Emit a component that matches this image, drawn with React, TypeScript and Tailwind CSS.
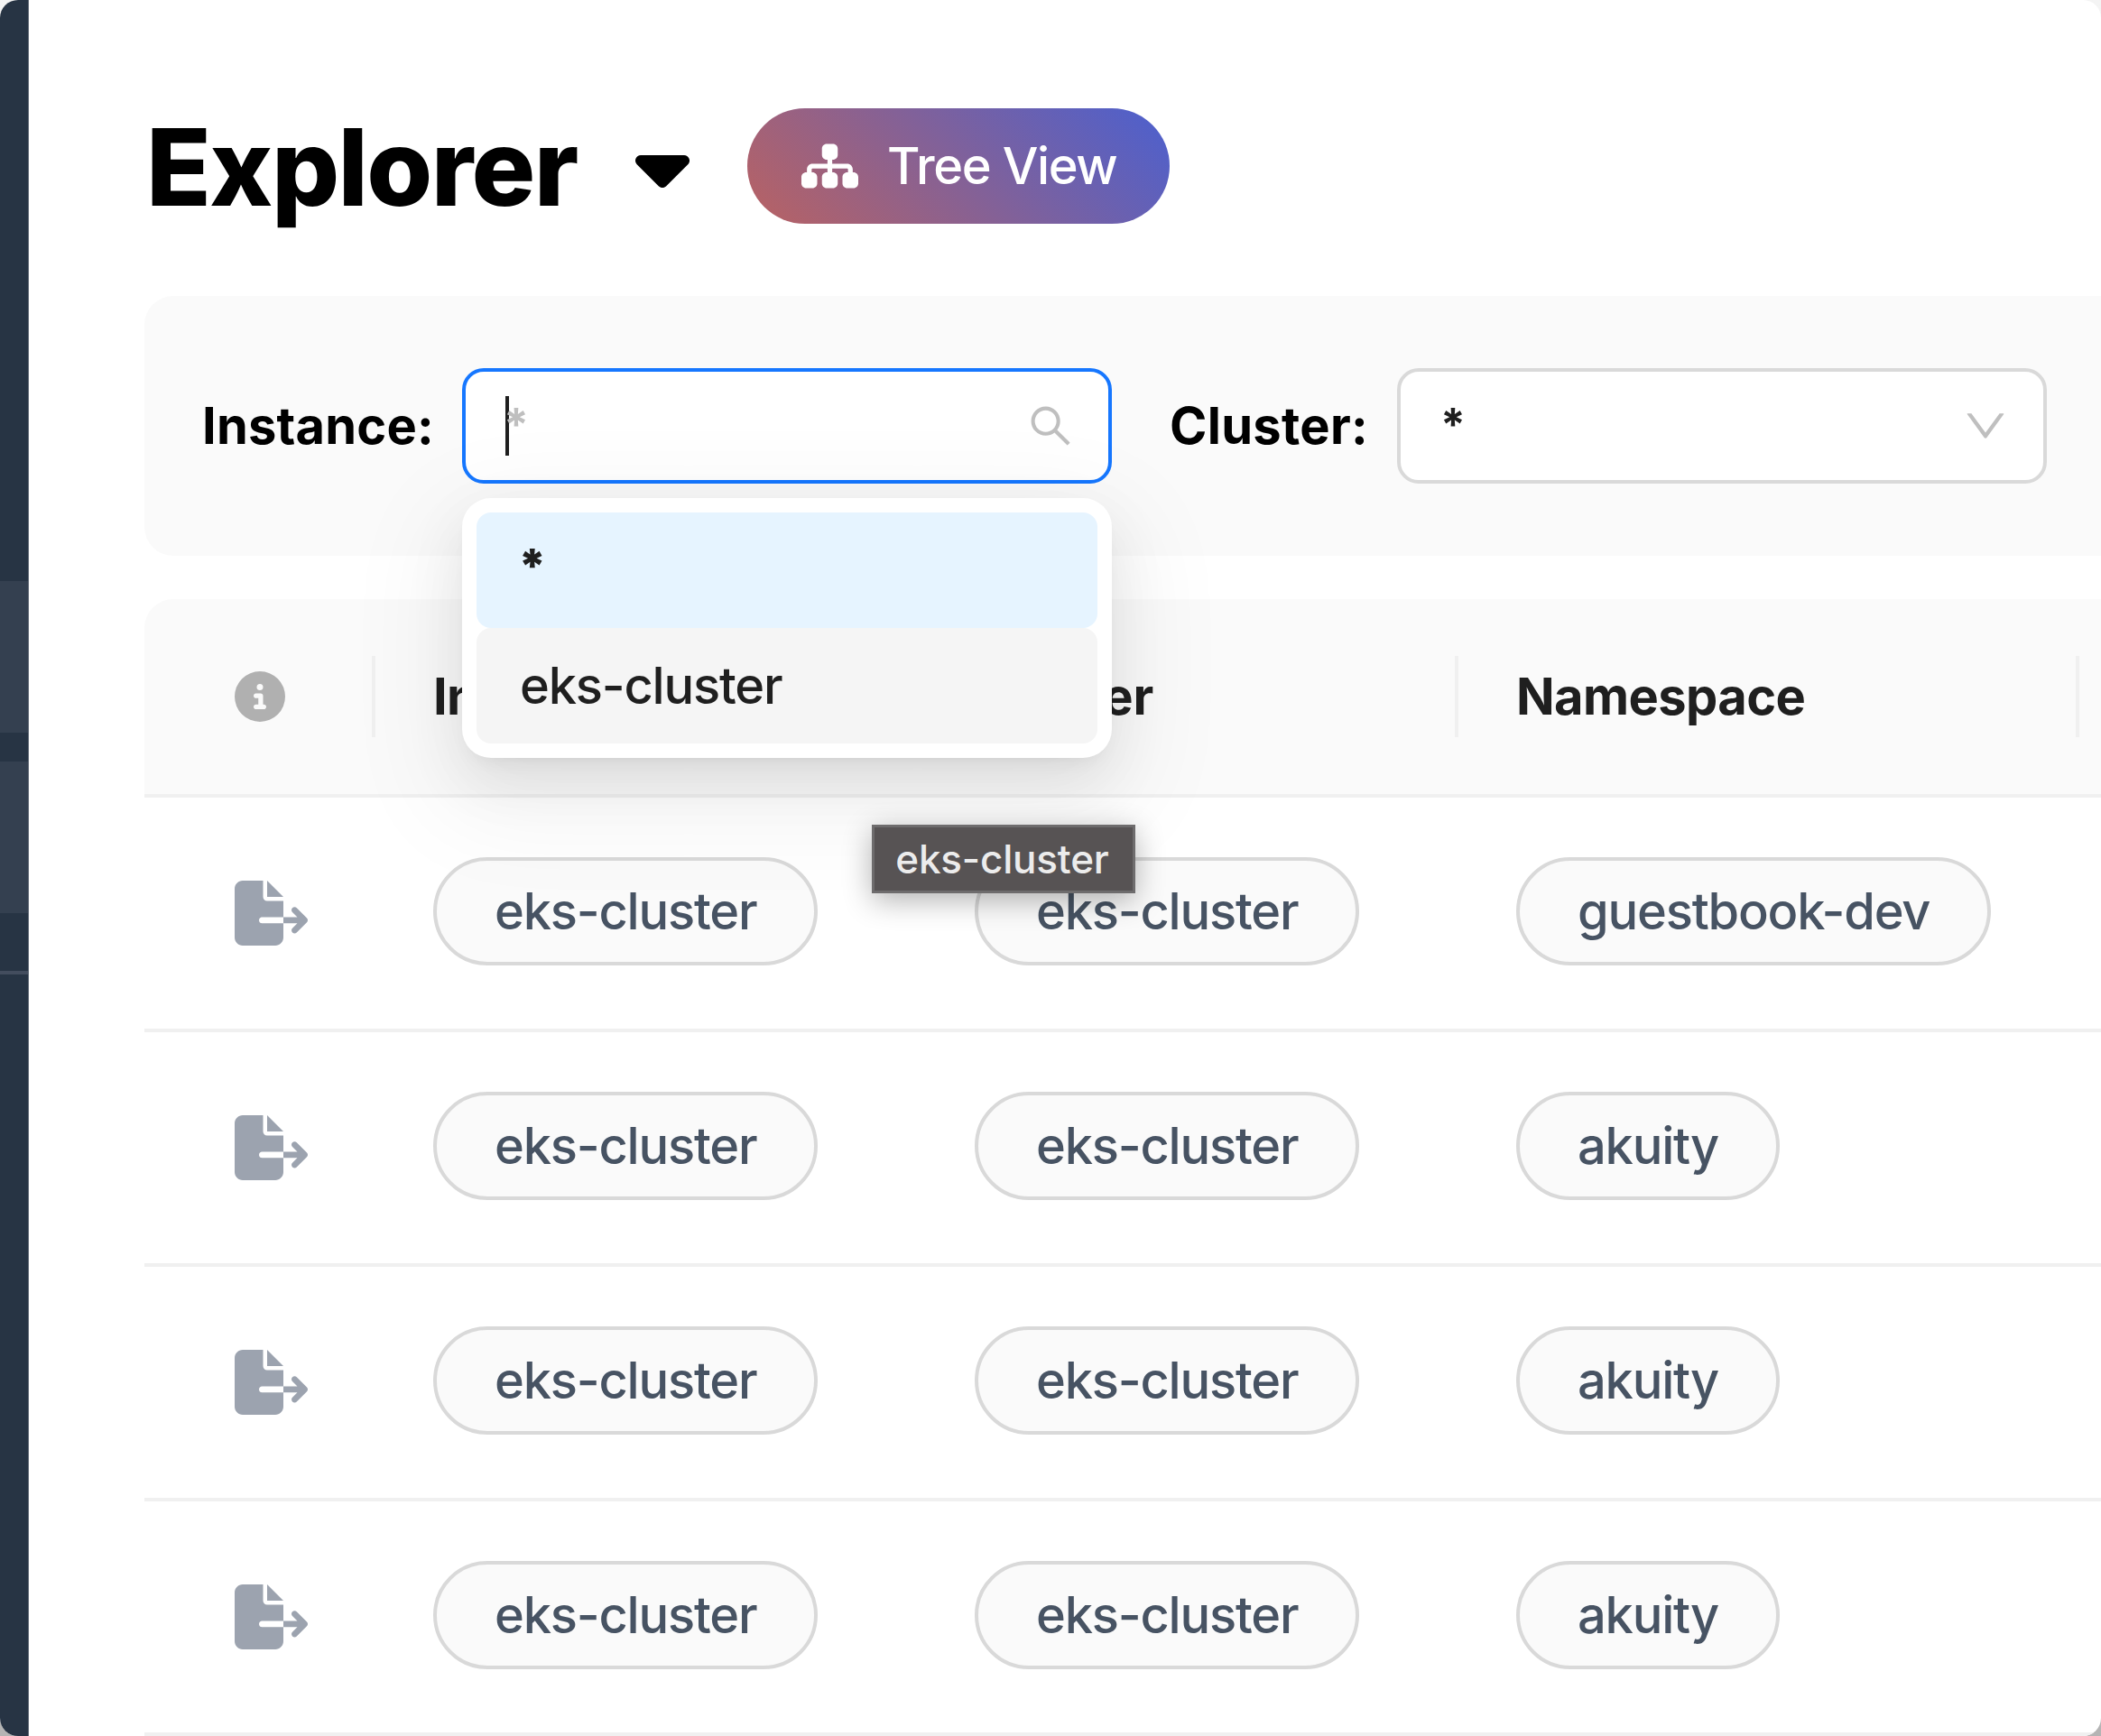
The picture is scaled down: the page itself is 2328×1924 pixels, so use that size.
import React from "react";
import { FaCaretDown, FaCircleInfo, FaFileExport, FaSitemap } from "react-icons/fa6";

const rows = [
  { instance: "eks-cluster", cluster: "eks-cluster", namespace: "guestbook-dev" },
  { instance: "eks-cluster", cluster: "eks-cluster", namespace: "akuity" },
  { instance: "eks-cluster", cluster: "eks-cluster", namespace: "akuity" },
  { instance: "eks-cluster", cluster: "eks-cluster", namespace: "akuity" },
];

function SearchIcon() {
  return (
    <svg viewBox="64 64 896 896" className="h-12 w-12 fill-[#bfbfbf]">
      <path d="M909.6 854.5L649.9 594.8C690.2 542.7 712 479 712 412c0-80.2-31.3-155.4-87.9-212.1-56.6-56.7-132-87.9-212.1-87.9s-155.5 31.3-212.1 87.9C143.2 256.5 112 331.8 112 412c0 80.1 31.3 155.5 87.9 212.1C256.5 680.8 331.8 712 412 712c67 0 130.6-21.8 182.7-62l259.7 259.6a8.2 8.2 0 0 0 11.6 0l43.6-43.5a8.2 8.2 0 0 0 0-11.6zM570.4 570.4C528 612.7 471.8 636 412 636s-116-23.3-158.4-65.6C211.3 528 188 471.8 188 412s23.3-116.1 65.6-158.4C296 211.3 352.2 188 412 188s116.1 23.2 158.4 65.6S636 352.2 636 412s-23.3 116.1-65.6 158.4z" />
    </svg>
  );
}

function DownIcon() {
  return (
    <svg viewBox="64 64 896 896" className="h-12 w-12 fill-[#bfbfbf]">
      <path d="M884 256h-75c-5.1 0-9.9 2.5-12.9 6.6L512 654.2 227.9 262.6c-3-4.1-7.8-6.6-12.9-6.6h-75c-6.5 0-10.3 7.4-6.5 12.7l352.6 486.1c12.8 17.6 39 17.6 51.7 0l352.6-486.1c3.9-5.3.1-12.7-6.4-12.7z" />
    </svg>
  );
}

function Tag({ children }: { children: React.ReactNode }) {
  return (
    <span className="inline-flex h-[120px] items-center rounded-full border-4 border-[#d9d9d9] bg-[#fafafa] px-16 text-[#475363]">
      {children}
    </span>
  );
}

function Sidebar() {
  return (
    <aside className="flex w-8 shrink-0 flex-col border-r border-[#5f6875] bg-[#273444] pt-[644px]">
      <div className="h-[168px] bg-[#344050]" />
      <div className="mt-8 h-[168px] bg-[#344050]" />
      <div className="mt-16 h-1 bg-[#434d5e]" />
    </aside>
  );
}

function Dropdown() {
  return (
    <div className="absolute top-[140px] -left-1 z-10 w-[720px] rounded-[32px] bg-white p-4 text-[#1f1f1f] shadow-[0_24px_64px_0_rgba(0,0,0,0.08),0_12px_24px_-16px_rgba(0,0,0,0.12),0_36px_112px_32px_rgba(0,0,0,0.05)]">
      <div className="flex h-32 items-center rounded-2xl bg-[#e6f4ff] pr-12 pb-2 pl-[46px] text-[52px] font-black">*</div>
      <div className="flex h-32 items-center rounded-2xl bg-[#f5f5f5] px-12">eks-cluster</div>
    </div>
  );
}

function Filters() {
  return (
    <section className="mt-20 flex h-72 w-[2300px] items-center rounded-[32px] bg-[#fafafa] pl-16">
      <span className="w-72 font-bold tracking-[0.2px] text-black">Instance:</span>
      <div className="relative flex h-32 w-[720px] items-center rounded-3xl border-4 border-[#1677ff] bg-white pr-10 pl-11">
        <span className="h-[66px] w-1 bg-[#1f1f1f]" />
        <span className="-ml-1.5 grow pb-1 text-[50px] font-bold text-[#bfbfbf]">*</span>
        <SearchIcon />
        <Dropdown />
      </div>
      <span className="ml-16 w-[252px] font-bold tracking-[0.3px] text-black">Cluster:</span>
      <div className="flex h-32 w-[720px] items-center rounded-3xl border-4 border-[#d9d9d9] bg-white pr-10 pl-11">
        <span className="grow pb-1 text-[50px] font-bold text-[#1f1f1f]">*</span>
        <DownIcon />
      </div>
    </section>
  );
}

function Divider() {
  return <span className="h-[90px] w-1 bg-[#f0f0f0]" />;
}

function HeaderCell({ children }: { children: React.ReactNode }) {
  return (
    <div className="flex items-center justify-between pl-16">
      <span>{children}</span>
      <Divider />
    </div>
  );
}

function ResourceTable() {
  return (
    <section className="mt-12 w-[2300px]">
      <div className="grid h-[220px] grid-cols-[256px_600px_600px_688px] rounded-t-[32px] border-b-4 border-[#f0f0f0] bg-[#fafafa] font-[660] tracking-[-0.6px] text-[#1f1f1f]">
        <div className="flex items-center justify-between pl-[100px]">
          <FaCircleInfo className="h-14 w-14 text-[#b0b0b0]" />
          <Divider />
        </div>
        <HeaderCell>Instance</HeaderCell>
        <HeaderCell><span className="tracking-[-0.1px]">Cluster</span></HeaderCell>
        <HeaderCell>Namespace</HeaderCell>
      </div>
      {rows.map((row, i) => (
        <div
          key={i}
          className="grid h-[260px] grid-cols-[256px_600px_600px_688px] items-center border-b-4 border-[#f0f0f0]"
        >
          <FaFileExport className="ml-[100px] h-[72px] w-[81px] text-[#9ca3af]" />
          <div className="flex pb-1 pl-16"><Tag>{row.instance}</Tag></div>
          <div className="flex pb-1 pl-16"><Tag>{row.cluster}</Tag></div>
          <div className="flex pb-1 pl-16"><Tag>{row.namespace}</Tag></div>
        </div>
      ))}
    </section>
  );
}

export default function App() {
  return (
    <div className="h-[1924px] w-[2328px] overflow-hidden bg-linear-to-b from-[#f4f4f4] to-[#b4b4b4] font-['Inter','Liberation_Sans',sans-serif] text-[56px] leading-none font-[450] tracking-[-1.2px]">
      <div className="relative flex h-full w-full overflow-hidden rounded-[20px] bg-white">
        <Sidebar />
        <main className="w-0 grow overflow-hidden pt-[120px] pl-32">
          <header className="flex h-32 items-center">
            <h1 className="w-[544px] pt-0.5 pl-0.5 text-[118px] font-extrabold tracking-[-1.6px] text-black">Explorer</h1>
            <FaCaretDown className="h-24 w-[60px] text-black" />
            <button className="ml-16 flex h-32 w-[468px] items-center gap-8 rounded-full bg-[linear-gradient(45deg,#b96262,#4b60cf)] pl-[60px] tracking-[-1.4px] whitespace-nowrap text-white">
              <FaSitemap className="h-14 w-[63px]" />
              Tree View
            </button>
          </header>
          <Filters />
          <ResourceTable />
        </main>
        <div className="absolute top-[914px] left-[966px] z-20 flex h-[76px] w-[292px] items-center justify-center border-3 border-[#6e6c6d] bg-[#575354] pr-[3px] text-[44px] tracking-[-0.2px] text-[#ececec] shadow-[0_8px_32px_rgba(0,0,0,0.3)]">
          eks-cluster
        </div>
      </div>
    </div>
  );
}
